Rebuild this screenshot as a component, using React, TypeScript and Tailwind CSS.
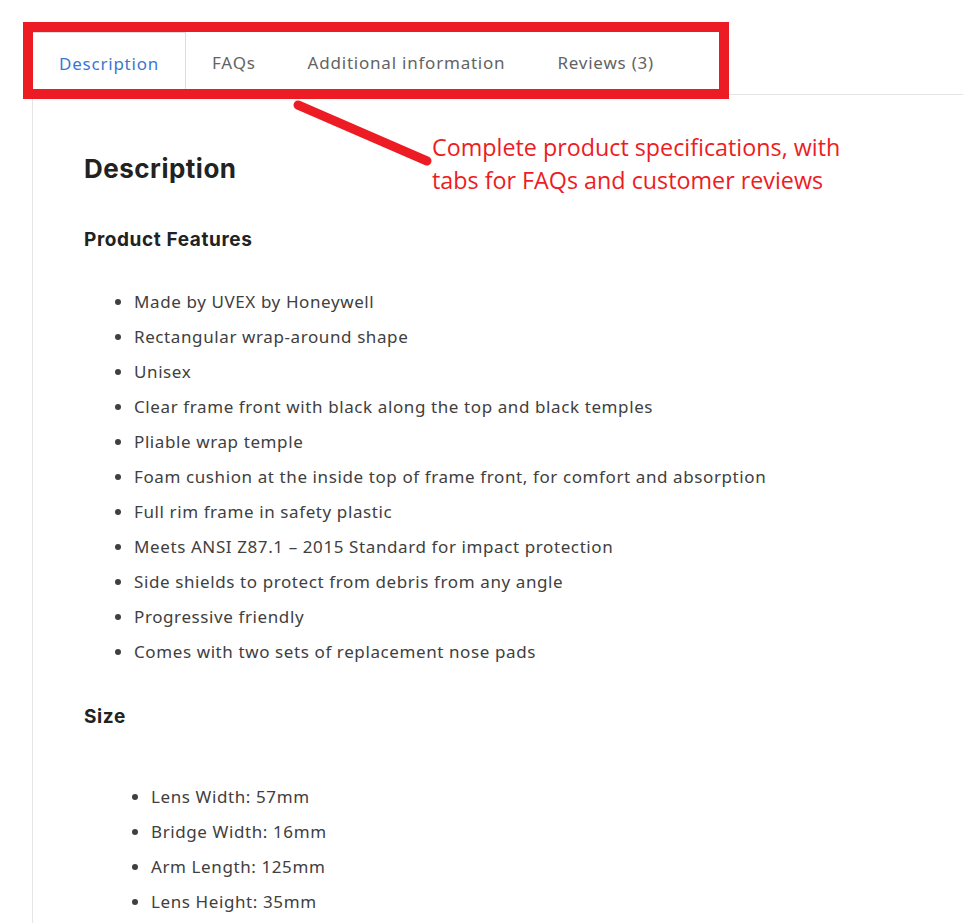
const features = [
  'Made by UVEX by Honeywell',
  'Rectangular wrap-around shape',
  'Unisex',
  'Clear frame front with black along the top and black temples',
  'Pliable wrap temple',
  'Foam cushion at the inside top of frame front, for comfort and absorption',
  'Full rim frame in safety plastic',
  'Meets ANSI Z87.1 – 2015 Standard for impact protection',
  'Side shields to protect from debris from any angle',
  'Progressive friendly',
  'Comes with two sets of replacement nose pads',
];

const sizes = [
  'Lens Width: 57mm',
  'Bridge Width: 16mm',
  'Arm Length: 125mm',
  'Lens Height: 35mm',
];

const tabs = ['Description', 'FAQs', 'Additional information', 'Reviews (3)'];

export default function App() {
  return (
    <div className="relative min-h-screen bg-white pl-[32px] pt-[32px] overflow-hidden" style={{ fontFamily: '"Noto Sans", sans-serif' }}>
      {/* tab strip */}
      <div className="flex h-[63px] border-b border-[#e5e5e5]">
        {tabs.map((t, i) => (
          <button
            key={t}
            className={
              i === 0
                ? 'h-[64px] -mb-px px-[26px] pb-[2px] border border-b-0 border-[#dcdcdc] bg-white text-[17px] tracking-[0.78px] text-[#3a77d2]'
                : 'h-[63px] px-[26px] pb-[2px] text-[17px] tracking-[0.78px] text-[#636363]'
            }
          >
            {t}
          </button>
        ))}
      </div>

      {/* panel */}
      <div className="border-l border-[#e5e5e5] pl-[51px] pt-[58px] pb-10">
        <h2 className="text-[26px] font-bold leading-[32px] text-[#222] tracking-[0.5px]" style={{ fontFamily: 'Inter, sans-serif' }}>
          Description
        </h2>
        <h3 className="mt-[43px] text-[19px] font-bold leading-[24px] text-[#222] tracking-[0.6px]" style={{ fontFamily: 'Inter, sans-serif' }}>
          Product Features
        </h3>
        <ul className="mt-[32px] list-disc pl-[50px] text-[17px] leading-[35px] tracking-[0.6px] text-[#404040]">
          {features.map((f) => (
            <li key={f}>{f}</li>
          ))}
        </ul>
        <h3 className="mt-[36px] text-[19px] font-bold leading-[24px] text-[#222] tracking-[0.6px]" style={{ fontFamily: 'Inter, sans-serif' }}>
          Size
        </h3>
        <ul className="mt-[50px] list-disc pl-[67px] text-[17px] leading-[35px] tracking-[0.6px] text-[#404040]">
          {sizes.map((s) => (
            <li key={s}>{s}</li>
          ))}
        </ul>
      </div>

      {/* annotation overlay */}
      <div className="absolute left-[23px] top-[22px] w-[706px] h-[77px] border-[10px] border-[#ed1c24] pointer-events-none" />
      <svg className="absolute left-0 top-0 pointer-events-none" width="963" height="923">
        <line x1="298" y1="105" x2="427" y2="161" stroke="#ed1c24" strokeWidth="9" strokeLinecap="round" />
      </svg>
      <div
        className="absolute left-[432px] top-[131px] text-[23.3px] leading-[33px] text-[#ed1c24]"
        style={{ fontFamily: '"Open Sans", sans-serif' }}
      >
        Complete product specifications, with
        <br />
        tabs for FAQs and customer reviews
      </div>
    </div>
  );
}
